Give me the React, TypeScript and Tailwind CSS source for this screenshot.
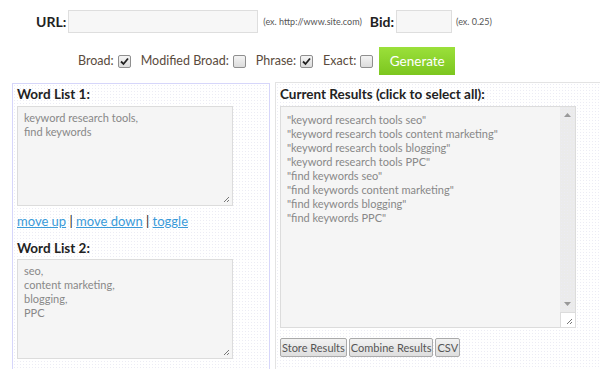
import React from "react";

const Check = ({ checked }: { checked?: boolean }) => (
  <span className="inline-flex items-center justify-center w-[13px] h-[13px] border border-[#8f8f8f] rounded-[2px] bg-gradient-to-b from-[#f4f4f4] to-[#dcdcdc] ml-[4px]">
    {checked && (
      <svg width="9" height="9" viewBox="0 0 9 9">
        <path d="M1 4.5 L3.5 7 L8 1.5" stroke="#222" strokeWidth="1.8" fill="none" />
      </svg>
    )}
  </span>
);

const results = [
  "keyword research tools seo",
  "keyword research tools content marketing",
  "keyword research tools blogging",
  "keyword research tools PPC",
  "find keywords seo",
  "find keywords content marketing",
  "find keywords blogging",
  "find keywords PPC",
];

const dots =
  "bg-[radial-gradient(#ececf4_0.8px,transparent_0.8px)] bg-[length:3px_3px]";

const Resize = () => (
  <svg width="7" height="7" viewBox="0 0 7 7" className="absolute right-[2px] bottom-[2px]">
    <path d="M6 1 L1 6 M6 4 L4 6" stroke="#777" strokeWidth="1" />
  </svg>
);

export default function App() {
  return (
    <div className="w-[600px] h-[369px] overflow-hidden bg-white font-['Lato',sans-serif] text-[#5a4b3d]">
      {/* URL / Bid row */}
      <div className="flex items-center pt-[10px] pl-[36px] h-[33px]">
        <span className="font-bold text-[14px] text-[#222]">URL:</span>
        <div className="ml-[2px] w-[190px] h-[23px] border border-[#dedede] bg-[#f7f7f7]" />
        <span className="ml-[5px] text-[9px] text-[#555]">(ex. http://www.site.com)</span>
        <span className="ml-[8px] font-bold text-[14px] text-[#222]">Bid:</span>
        <div className="ml-[2px] w-[56px] h-[23px] border border-[#dedede] bg-[#f7f7f7]" />
        <span className="ml-[4px] text-[9px] text-[#555]">(ex. 0.25)</span>
      </div>

      {/* match types row */}
      <div className="flex items-center pl-[78px] mt-[14px] h-[28px] text-[12.5px]">
        <span>Broad:</span>
        <Check checked />
        <span className="ml-[10px]">Modified Broad:</span>
        <Check />
        <span className="ml-[10px]">Phrase:</span>
        <Check checked />
        <span className="ml-[10px]">Exact:</span>
        <Check />
        <button className="ml-[6px] w-[76px] h-[28px] bg-gradient-to-b from-[#9be03a] to-[#7cc61e] text-white text-[13.5px]">
          Generate
        </button>
      </div>

      {/* panels */}
      <div className="flex mt-[8px]">
        <div className={`ml-[12px] w-[258px] h-[300px] border border-[#d6d6fa] px-[4px] ${dots}`}>
          <div className="font-bold text-[13.5px] text-[#222]">Word List 1:</div>
          <div className="relative mt-[2px] w-[216px] h-[100px] border border-[#dcdcdc] bg-[#f5f5f5] px-[6px] py-[4px] text-[11px] leading-[14px] text-[#888]">
            keyword research tools,
            <br />
            find keywords
            <Resize />
          </div>
          <div className="mt-[6px] text-[13px] text-[#222]">
            <span className="text-[#3a9ad9] underline">move up</span> |{" "}
            <span className="text-[#3a9ad9] underline">move down</span> |{" "}
            <span className="text-[#3a9ad9] underline">toggle</span>
          </div>
          <div className="mt-[6px] font-bold text-[13.5px] text-[#222]">Word List 2:</div>
          <div className="relative mt-[1px] w-[216px] h-[100px] border border-[#dcdcdc] bg-[#f5f5f5] px-[6px] py-[4px] text-[11px] leading-[14px] text-[#888]">
            seo,
            <br />
            content marketing,
            <br />
            blogging,
            <br />
            PPC
            <Resize />
          </div>
        </div>

        <div className={`ml-[5px] flex-1 h-[300px] border-t border-l border-[#e3e3e3] -mt-[1px] pl-[4px] pt-[1px] ${dots}`}>
          <div className="font-bold text-[13.5px] text-[#222]">Current Results (click to select all):</div>
          <div className="mt-[2px] flex w-[296px] h-[222px] border border-[#dcdcdc] bg-[#f5f5f5]">
            <div className="flex-1 px-[6px] py-[6px] text-[11px] leading-[14px] text-[#888]">
              {results.map((r) => (
                <div key={r}>"{r}"</div>
              ))}
            </div>
            <div className="w-[15px] flex flex-col">
              <div className={`flex-1 flex flex-col items-center justify-between py-[6px] bg-[#ebebeb] ${dots}`}>
                <svg width="7" height="4" viewBox="0 0 7 4"><path d="M0 4 L3.5 0 L7 4Z" fill="#999" /></svg>
                <svg width="7" height="4" viewBox="0 0 7 4"><path d="M0 0 L3.5 4 L7 0Z" fill="#999" /></svg>
              </div>
              <div className="relative h-[15px] bg-white border-t border-l border-[#dcdcdc]">
                <Resize />
              </div>
            </div>
          </div>
          <div className="mt-[10px] flex gap-[2px] text-[11px] text-[#555]">
            {["Store Results", "Combine Results", "CSV"].map((b) => (
              <button
                key={b}
                className="h-[19px] px-[1px] leading-[16px] border border-[#aaa] rounded-[2px] bg-gradient-to-b from-[#f2f2f2] to-[#dedede]"
              >
                {b}
              </button>
            ))}
          </div>
        </div>
      </div>
    </div>
  );
}
